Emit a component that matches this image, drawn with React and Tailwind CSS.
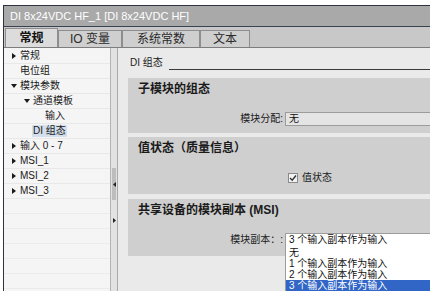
import React from 'react';

const font = "font-['Liberation_Sans','Noto_Sans_CJK_SC',sans-serif]";

function Arrow({ dir }) {
  if (dir === 'down') {
    return (
      <svg width="6" height="5" viewBox="0 0 6 5" className="shrink-0">
        <path d="M0 0 L6 0 L3 4 Z" fill="#1a1a1a" />
      </svg>
    );
  }
  return (
    <svg width="5" height="6" viewBox="0 0 5 6" className="shrink-0">
      <path d="M0 0 L4 3 L0 6 Z" fill="#1a1a1a" />
    </svg>
  );
}

const treeRows = [
  { arrow: 'right', text: '常规', pad: 'pl-[8px]' },
  { text: '电位组', pad: 'pl-[16px]' },
  { arrow: 'down', text: '模块参数', pad: 'pl-[7px]' },
  { arrow: 'down', text: '通道模板', pad: 'pl-[20px]' },
  { text: '输入', pad: 'pl-[41px]' },
  { text: 'DI 组态', pad: 'pl-[28px]', selected: true },
  { arrow: 'right', text: '输入 0 - 7', pad: 'pl-[8px]' },
  { arrow: 'right', text: 'MSI_1', pad: 'pl-[8px]' },
  { arrow: 'right', text: 'MSI_2', pad: 'pl-[8px]' },
  { arrow: 'right', text: 'MSI_3', pad: 'pl-[8px]' },
];

const tabs = [
  { label: '常规', w: 'w-[53px]', active: true },
  { label: 'IO 变量', w: 'w-[64px]' },
  { label: '系统常数', w: 'w-[78px]' },
  { label: '文本', w: 'w-[50px]' },
];

function TreeRow({ row }) {
  return (
    <div className={`h-[15px] border-b border-[#e8e8e8] flex items-center ${row.pad} text-[10px] leading-[12px] text-[#1a1a1a]`}>
      {row.arrow && <Arrow dir={row.arrow} />}
      {row.arrow && <span className="w-[3px] shrink-0" />}
      {row.selected ? (
        <span className="bg-[#d3dfec] px-[1px]">{row.text}</span>
      ) : (
        <span>{row.text}</span>
      )}
    </div>
  );
}

function Section({ title, h, children }) {
  return (
    <div className={`${h} bg-[#cfcfcf] pt-[5px] flex flex-col mr-[-8px]`}>
      <div className="pl-[10px] text-[12px] leading-[12px] font-bold text-[#1a1a1a]">{title}</div>
      <div className="mt-[17px] flex items-center h-[14px]">{children}</div>
    </div>
  );
}

export default function App() {
  const blanks = Array.from({ length: 7 });
  return (
    <div className={`w-[430px] h-[291px] bg-white overflow-hidden pt-[5px] pl-[3px] ${font}`}>
      <div className="h-full border-l border-t border-[#2c3441] flex flex-col">
        {/* title bar */}
        <div className="h-[21px] shrink-0 bg-[#a9a9a9] border-b border-[#3a4350] flex items-center pl-[6px] text-white text-[11px] font-['Liberation_Sans',sans-serif]">
          DI 8x24VDC HF_1 [DI 8x24VDC HF]
        </div>

        {/* tabs */}
        <div className="h-[21px] shrink-0 bg-[#c8c8c8] border-b border-[#7d7d7d] flex items-end pl-[1px]">
          {tabs.map((t) => (
            <div
              key={t.label}
              className={`${t.w} flex items-center justify-center border border-b-0 border-[#8e8e8e] text-[12px] leading-[12px] ${
                t.active
                  ? 'h-[19px] bg-[#dcdcdc] font-bold text-[#111]'
                  : 'h-[17px] bg-[#cfcfcf] text-[#2a2a2a]'
              }`}
            >
              {t.label}
            </div>
          ))}
        </div>

        {/* body */}
        <div className="flex-1 flex min-h-0">
          {/* tree */}
          <div className="w-[107px] shrink-0 bg-[#f5f5f5] border-r border-[#b4b4b4] pt-[1px] overflow-hidden">
            {treeRows.map((r) => (
              <TreeRow key={r.text} row={r} />
            ))}
            {blanks.map((_, i) => (
              <div key={i} className="h-[15px] border-b border-[#ebebeb]" />
            ))}
          </div>

          {/* splitter */}
          <div className="w-[7px] shrink-0 bg-[#e2e2e2] border-r border-[#a9a9a9] flex flex-col items-center">
            <div className="h-[120px] shrink-0" />
            <div className="w-[4px] h-[32px] bg-[#bdbdbd] flex items-center justify-center">
              <svg width="3" height="5" viewBox="0 0 3 5">
                <path d="M3 0 L0 2.5 L3 5 Z" fill="#222" />
              </svg>
            </div>
            <div className="mt-[18px]">
              <svg width="3" height="5" viewBox="0 0 3 5">
                <path d="M0 0 L3 2.5 L0 5 Z" fill="#222" />
              </svg>
            </div>
          </div>

          {/* content */}
          <div className="flex-1 bg-[#eaeaea] pl-[10px] flex flex-col min-w-0">
            <div className="h-[23px] shrink-0 flex items-end">
              <span className="pl-[2px] pb-[2px] text-[10px] leading-[12px] text-[#1a1a1a]">DI 组态</span>
              <div className="flex-1 h-px bg-[#3a3a3a] ml-[6px] mb-[1px]" />
            </div>
            <div className="h-[7px] shrink-0" />

            <Section title="子模块的组态" h="h-[55px]">
              <div className="w-[157px] shrink-0 text-right pr-[2px] text-[10px] leading-[12px] text-[#1a1a1a]">模块分配:</div>
              <div className="flex-1 h-[14px] bg-[#e4e4e4] border border-[#9c9c9c] pl-[3px] text-[10px] leading-[12px] text-[#111]">无</div>
            </Section>

            <div className="h-[4px] shrink-0" />

            <Section title="值状态（质量信息）" h="h-[57px]">
              <div className="w-[160px] shrink-0" />
              <div className="w-[10px] h-[10px] bg-[#f2f2f2] border border-[#8a8a8a] flex items-center justify-center">
                <svg width="8" height="8" viewBox="0 0 8 8">
                  <path d="M1 4 L3.2 6.2 L7 1.5" fill="none" stroke="#333" strokeWidth="1.4" />
                </svg>
              </div>
              <span className="ml-[4px] text-[10px] leading-[12px] text-[#1a1a1a]">值状态</span>
            </Section>

            <div className="h-[5px] shrink-0" />

            <Section title="共享设备的模块副本 (MSI)" h="h-[57px]">
              <div className="w-[157px] shrink-0 text-right pr-[2px] text-[10px] leading-[12px] text-[#1a1a1a]">模块副本：:</div>
              <div className="flex-1 relative h-[14px]">
                <div className="h-[14px] bg-white border border-[#9c9c9c] pl-[3px] text-[10px] leading-[12px] text-[#111]">
                  3 个输入副本作为输入
                </div>
                <div className="absolute left-0 right-0 top-[13px] bg-white border-l border-[#9c9c9c] pt-[1px] text-[10px] leading-[11px] text-[#111] z-10">
                  <div className="h-[11px] pl-[3px]">无</div>
                  <div className="h-[11px] pl-[3px]">1 个输入副本作为输入</div>
                  <div className="h-[11px] pl-[3px]">2 个输入副本作为输入</div>
                  <div className="h-[11px] pl-[3px] bg-[#3165c6] text-white">3 个输入副本作为输入</div>
                </div>
              </div>
            </Section>

            <div className="flex-1" />
          </div>
        </div>
      </div>
    </div>
  );
}
